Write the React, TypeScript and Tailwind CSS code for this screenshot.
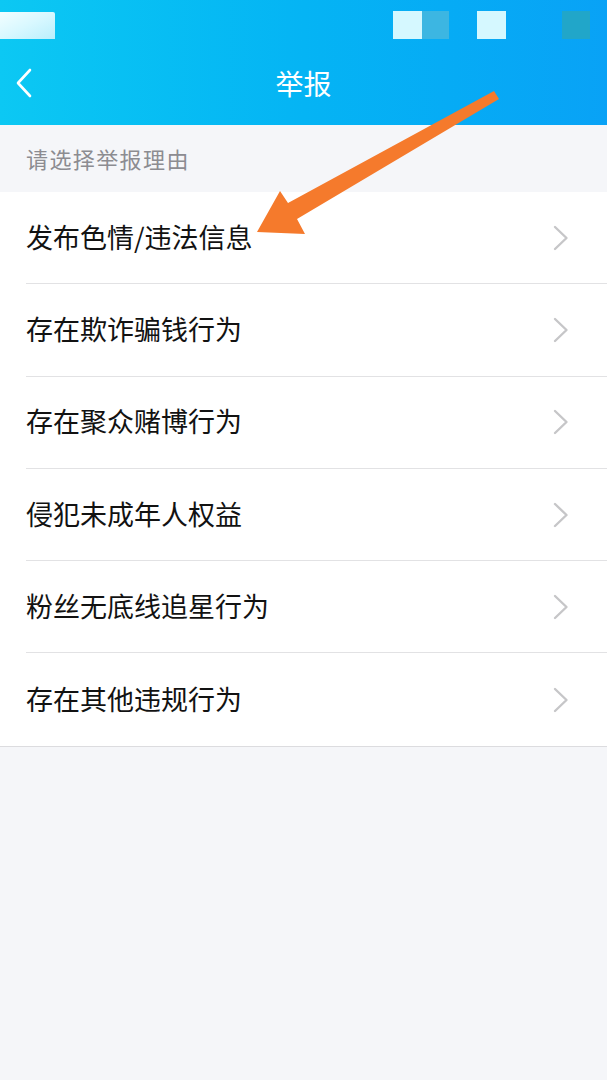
import React from 'react';

const reasons = [
  '发布色情/违法信息',
  '存在欺诈骗钱行为',
  '存在聚众赌博行为',
  '侵犯未成年人权益',
  '粉丝无底线追星行为',
  '存在其他违规行为',
];

const Chevron: React.FC<{ className?: string }> = ({ className }) => (
  <svg width="16" height="26" viewBox="0 0 16 26" className={className} fill="none">
    <path d="M2 2 L13.5 13 L2 24" stroke="currentColor" strokeWidth="2.4" strokeLinecap="round" strokeLinejoin="round" />
  </svg>
);

const App: React.FC = () => {
  return (
    <div
      className="relative min-h-[1080px] w-[607px] bg-[#f5f6f9]"
      style={{ fontFamily: '"Noto Sans CJK SC", "Noto Sans", sans-serif' }}
    >
      {/* header */}
      <div className="h-[125px] bg-gradient-to-r from-[#0cc8f3] via-[#05b4f4] to-[#09a2f6]">
        <div className="flex h-[50px] items-center justify-between pl-0 pr-[17px]">
          <div className="h-[27px] w-[55px] rounded-tr-[2px] bg-gradient-to-br from-[#f2feff] via-[#d8f8ff] to-[#b9effc]" />
          <div className="flex items-center">
            <div className="h-[28px] w-[29px] bg-[#d5f8ff]" />
            <div className="h-[28px] w-[27px] bg-[#3cb6e2]" />
            <div className="ml-[28px] h-[28px] w-[29px] bg-[#d5f8ff]" />
            <div className="ml-[56px] h-[28px] w-[28px] bg-[#21a6c9]" />
          </div>
        </div>
        <div className="relative flex h-[66px] items-center justify-center">
          <button className="absolute left-[14px] top-[17px] text-white">
            <svg width="20" height="32" viewBox="0 0 20 32" fill="none">
              <path d="M16 3 L4 16 L16 29" stroke="currentColor" strokeWidth="2.6" strokeLinecap="round" strokeLinejoin="round" />
            </svg>
          </button>
          <h1 className="text-[28px] font-normal text-white">举报</h1>
        </div>
      </div>

      {/* section label */}
      <div className="flex h-[67px] items-center px-[26px] text-[22px] tracking-[1.4px] text-[#8c8c91]">
        请选择举报理由
      </div>

      {/* list */}
      <div className="border-b-[1.5px] border-[#dcdcdf] bg-white">
        {reasons.map((r, i) => (
          <div key={r} className="pl-[26px]">
            <div
              className={
                'flex h-[92.3px] items-center justify-between pr-[38px] ' +
                (i < reasons.length - 1 ? 'border-b-[1.5px] border-[#e2e2e4]' : '')
              }
            >
              <span className="-mt-[1px] text-[27px] text-[#121212]">{r}</span>
              <Chevron className="text-[#c6c6c8]" />
            </div>
          </div>
        ))}
      </div>

      {/* annotation arrow */}
      <svg className="pointer-events-none absolute left-0 top-0" width="607" height="260" viewBox="0 0 607 260">
        <polygon
          points="257,232 280,191 288,203 494,91 499,99 297,219 305,234"
          fill="#f57a2c"
          strokeLinejoin="round"
        />
      </svg>
    </div>
  );
};

export default App;
